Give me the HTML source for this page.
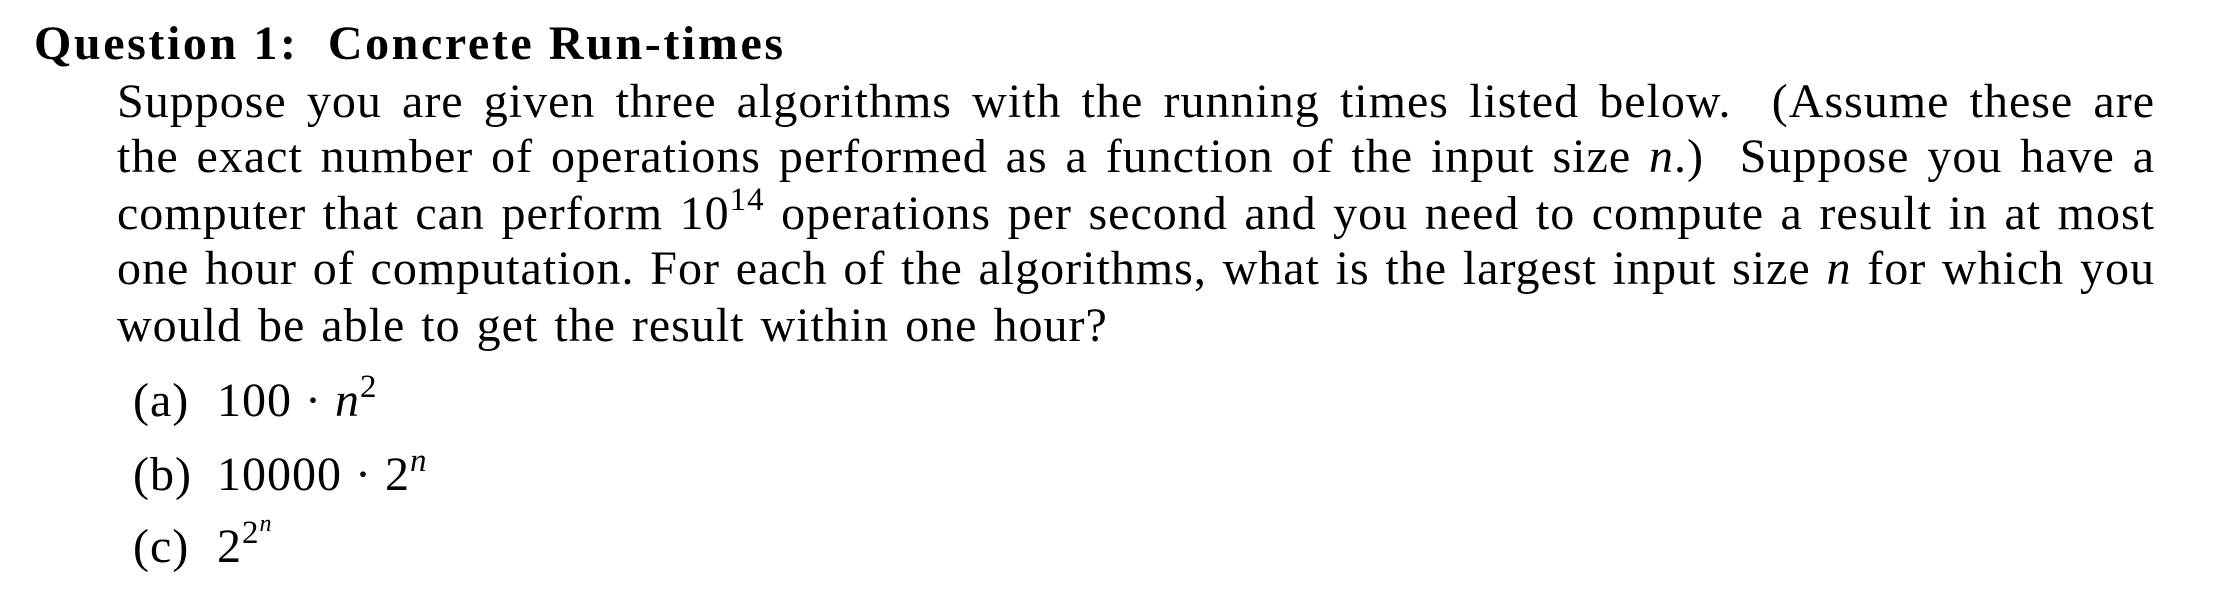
<!DOCTYPE html>
<html><head><meta charset="utf-8"><style>
html,body{margin:0;padding:0;background:#fff;}
body{width:2222px;height:600px;position:relative;overflow:hidden;font-family:"Liberation Serif",serif;color:#000;}
.l{position:absolute;left:117px;width:2038px;font-size:48px;line-height:56px;height:56px;white-space:nowrap;text-align:justify;text-align-last:justify;letter-spacing:1px;}
.t{position:absolute;left:34px;top:16px;font-size:48px;font-weight:bold;line-height:56px;white-space:nowrap;letter-spacing:2.6px;}
sup{font-size:33px;line-height:0;vertical-align:0;position:relative;top:-19px;}
i{font-style:italic;}
.it{position:absolute;font-size:48px;line-height:56px;white-space:nowrap;letter-spacing:1px;}
</style></head><body>
<div class="t">Question 1: &nbsp;Concrete Run-times</div>
<div class="l" style="top:74px">Suppose you are given three algorithms with the running times listed below. &nbsp;(Assume these are</div>
<div class="l" style="top:129px">the exact number of operations performed as a function of the input size <i>n</i>.) &nbsp;Suppose you have a</div>
<div class="l" style="top:186px">computer that can perform 10<sup>14</sup> operations per second and you need to compute a result in at most</div>
<div class="l" style="top:241px">one hour of computation. For each of the algorithms, what is the largest input size <i>n</i> for which you</div>
<div class="l" style="top:298px;width:auto;text-align:left;text-align-last:left;word-spacing:3px">would be able to get the result within one hour?</div>
<div class="it" style="left:133px;top:373px">(a)</div><div class="it" style="left:217px;top:373px">100 · <i>n</i><sup>2</sup></div>
<div class="it" style="left:133px;top:447px">(b)</div><div class="it" style="left:217px;top:447px">10000 · 2<sup><i>n</i></sup></div>
<div class="it" style="left:133px;top:519px">(c)</div><div class="it" style="left:217px;top:519px">2<sup>2<span style="font-size:24px;position:relative;top:-12px"><i>n</i></span></sup></div>
</body></html>
